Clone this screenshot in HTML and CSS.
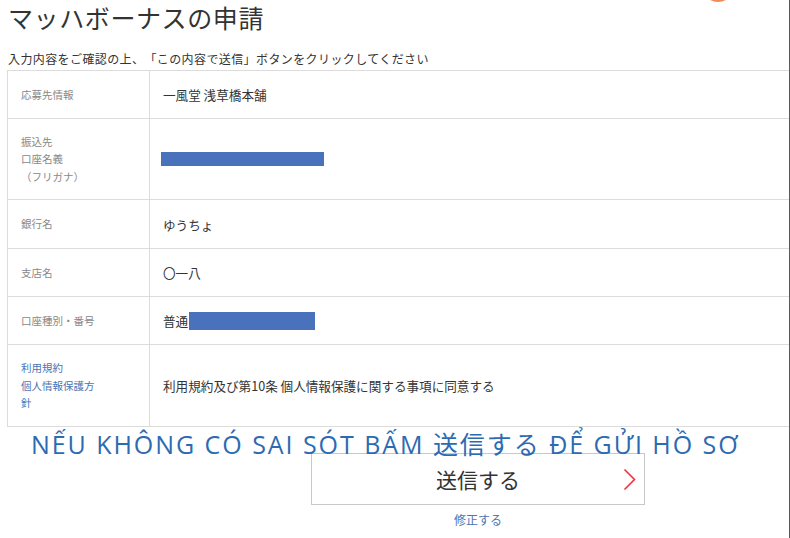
FILE: index.html
```html
<!DOCTYPE html>
<html lang="ja">
<head>
<meta charset="utf-8">
<link rel="stylesheet" href="styles.css">
</head>
<body>
<div class="page">
  <div class="blob"></div>
  <h1 class="title">マッハボーナスの申請</h1>
  <p class="lead">入力内容をご確認の上、「この内容で送信」ボタンをクリックしてください</p>
  <div class="table">
    <div class="row r48">
      <div class="label">応募先情報</div>
      <div class="value">一風堂 浅草橋本舗</div>
    </div>
    <div class="row r81">
      <div class="label">振込先<br>口座名義<br>（フリガナ）</div>
      <div class="value"><span class="mask mask-name"></span></div>
    </div>
    <div class="row r49">
      <div class="label">銀行名</div>
      <div class="value">ゆうちょ</div>
    </div>
    <div class="row r48">
      <div class="label">支店名</div>
      <div class="value">〇一八</div>
    </div>
    <div class="row r48">
      <div class="label">口座種別・番号</div>
      <div class="value">普通<span class="mask mask-num"></span></div>
    </div>
    <div class="row r82">
      <div class="label link">利用規約<br>個人情報保護方<br>針</div>
      <div class="value">利用規約及び第10条 個人情報保護に関する事項に同意する</div>
    </div>
  </div>
  <div class="actions">
    <button class="submit"><span>送信する</span>
      <svg class="chev" width="13" height="23" viewBox="0 0 13 23"><path d="M1.5 1.5 L11.5 11.5 L1.5 21.5" fill="none" stroke="#e8343a" stroke-width="1.6"/></svg>
    </button>
    <a class="fix">修正する</a>
  </div>
  <div class="overlay">NẾU KHÔNG CÓ SAI SÓT BẤM 送信する ĐỂ GỬI HỒ SƠ</div>
</div>
</body>
</html>
```

FILE: styles.css
```css
html, body {
  margin: 0;
  padding: 0;
  background: #fff;
}
body {
  font-family: "Noto Sans CJK JP", "Noto Sans", sans-serif;
  color: #333;
}
.page {
  position: relative;
  width: 789px;
  height: 538px;
  border-right: 1px solid #5a5a5a;
  box-sizing: content-box;
  overflow: hidden;
}
.blob {
  position: absolute;
  left: 704px;
  top: -22px;
  width: 28px;
  height: 24px;
  border-radius: 50%;
  background: #f08a5a;
}
.title {
  margin: 0;
  padding: 0 0 0 8px;
  font-size: 25px;
  font-weight: 400;
  line-height: 34px;
  color: #333;
  letter-spacing: 0.6px;
}
.lead {
  margin: 17px 0 0 8px;
  font-size: 12px;
  line-height: 16px;
  color: #333;
  letter-spacing: 0.4px;
  text-spacing-trim: space-all;
}
.table {
  margin: 3px 0 0 7px;
  border-top: 1px solid #dcdcdc;
  border-left: 1px solid #dcdcdc;
}
.row {
  display: flex;
  border-bottom: 1px solid #dcdcdc;
  box-sizing: border-box;
}
.r48 { height: 48px; }
.r49 { height: 49px; }
.r81 { height: 81px; }
.r82 { height: 82px; }
.label {
  width: 142px;
  flex: none;
  border-right: 1px solid #dcdcdc;
  padding-left: 13px;
  box-sizing: border-box;
  display: flex;
  align-items: center;
  font-size: 10.5px;
  line-height: 17.5px;
  color: #888;
}
.label.link {
  color: #4a74b4;
}
.value {
  flex: 1;
  display: flex;
  align-items: center;
  padding-left: 13px;
  font-size: 12.6px;
  color: #333;
}
.mask {
  display: inline-block;
  background: #4a72bc;
}
.mask-name {
  width: 163px;
  height: 14px;
  margin-left: -2px;
}
.mask-num {
  width: 126px;
  height: 18px;
  margin-left: 1px;
}
.actions {
  display: flex;
  flex-direction: column;
  align-items: center;
  width: 334px;
  margin: 26px 0 0 311px;
}
.submit {
  position: relative;
  width: 334px;
  height: 52px;
  border: 1px solid #c8c8c8;
  background: #fff;
  font-family: "Noto Sans CJK JP", sans-serif;
  font-size: 21px;
  color: #333;
  padding: 0;
  display: flex;
  align-items: center;
  justify-content: center;
}
.chev {
  position: absolute;
  right: 8px;
  top: 14px;
}
.fix {
  margin-top: 7px;
  font-size: 12px;
  line-height: 16px;
  color: #4a74b4;
}
.overlay {
  position: absolute;
  left: 31px;
  top: 427px;
  font-family: "Open Sans", "Noto Sans CJK JP", sans-serif;
  font-size: 25px;
  line-height: 34px;
  color: #2c6bb2;
  white-space: nowrap;
  letter-spacing: 1.95px;
}
```
